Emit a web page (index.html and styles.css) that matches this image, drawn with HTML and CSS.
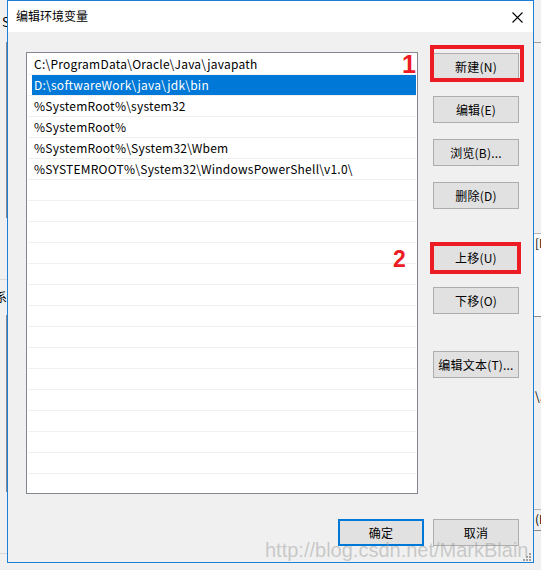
FILE: index.html
```html
<!DOCTYPE html>
<html lang="zh-CN">
<head>
<meta charset="utf-8">
<title>编辑环境变量</title>
<link rel="stylesheet" href="styles.css">
</head>
<body>
<div class="desk">
  <div class="behind">
    <span class="bk-s">S</span>
    <span class="bk-bar bk-bar1"></span>
    <span class="bk-bar bk-bar2"></span>
    <span class="bk-line bk-line1"></span>
    <span class="bk-xi">系</span>
    <span class="bk-line bk-line2"></span>
    <span class="bk-rline bk-rline1"></span>
    <span class="bk-rbox bk-rbox1"><span class="bk-rtext">[D</span></span>
    <span class="bk-rtext2">\.</span>
    <span class="bk-rbox bk-rbox2"><span class="bk-rtext">(L</span></span>
  </div>

  <div class="dialog">
    <div class="titlebar">
      <span class="title">编辑环境变量</span>
      <svg class="close" width="11" height="11" viewBox="0 0 11 11">
        <path d="M0.5 0.5 L10.5 10.5 M10.5 0.5 L0.5 10.5" stroke="#000" stroke-width="1.1" fill="none"/>
      </svg>
    </div>
    <div class="content">
      <div class="main">
        <div class="listbox">
          <div class="row"><span class="item">C:\ProgramData\Oracle\Java\javapath</span></div>
          <div class="row selected"><span class="item">D:\softwareWork\java\jdk\bin</span></div>
          <div class="row"><span class="item">%SystemRoot%\system32</span></div>
          <div class="row"><span class="item">%SystemRoot%</span></div>
          <div class="row"><span class="item">%SystemRoot%\System32\Wbem</span></div>
          <div class="row"><span class="item">%SYSTEMROOT%\System32\WindowsPowerShell\v1.0\</span></div>
          <div class="row"><span class="item"></span></div>
          <div class="row"><span class="item"></span></div>
          <div class="row"><span class="item"></span></div>
          <div class="row"><span class="item"></span></div>
          <div class="row"><span class="item"></span></div>
          <div class="row"><span class="item"></span></div>
          <div class="row"><span class="item"></span></div>
          <div class="row"><span class="item"></span></div>
          <div class="row"><span class="item"></span></div>
          <div class="row"><span class="item"></span></div>
          <div class="row"><span class="item"></span></div>
          <div class="row"><span class="item"></span></div>
          <div class="row"><span class="item"></span></div>
          <div class="row"><span class="item"></span></div>
          <div class="row"><span class="item"></span></div>
        </div>
        <div class="buttons">
          <button class="btn">新建(N)</button>
          <button class="btn">编辑(E)</button>
          <button class="btn">浏览(B)...</button>
          <button class="btn">删除(D)</button>
          <button class="btn btn-group">上移(U)</button>
          <button class="btn">下移(O)</button>
          <button class="btn btn-group2">编辑文本(T)...</button>
        </div>
      </div>
      <div class="footer">
        <button class="btn btn-default">确定</button>
        <button class="btn">取消</button>
      </div>
    </div>
    <svg class="grip" width="8" height="8" viewBox="0 0 8 8">
      <rect x="6" y="0" width="2" height="2" fill="#a0a0a0"/>
      <rect x="3" y="3" width="2" height="2" fill="#a0a0a0"/>
      <rect x="6" y="3" width="2" height="2" fill="#a0a0a0"/>
      <rect x="0" y="6" width="2" height="2" fill="#a0a0a0"/>
      <rect x="3" y="6" width="2" height="2" fill="#a0a0a0"/>
      <rect x="6" y="6" width="2" height="2" fill="#a0a0a0"/>
    </svg>
  </div>

  <div class="mark mark1"></div>
  <div class="mark mark2"></div>
  <span class="num num1">1</span>
  <span class="num num2">2</span>
  <span class="watermark">http://blog.csdn.net/MarkBlain</span>
</div>
</body>
</html>
```

FILE: styles.css
```css
* { box-sizing: border-box; }
html, body {
  margin: 0;
  padding: 0;
  background: #f0f0f0;
  font-family: "Noto Sans CJK SC", "Noto Sans", sans-serif;
  font-size: 12px;
  color: #000;
}
.desk {
  position: relative;
  width: 541px;
  height: 570px;
  overflow: hidden;
  padding-left: 7px;
}

/* window behind the dialog */
.behind span { position: absolute; }
.bk-s { left: 2px; top: 13px; font-size: 13px; line-height: 18px; }
.bk-bar { left: 6px; width: 2px; background: #8a8a8a; }
.bk-bar1 { top: 42px; height: 176px; }
.bk-bar2 { top: 315px; height: 177px; }
.bk-line { left: 0; width: 7px; height: 1px; background: #d9d9d9; }
.bk-line1 { top: 279px; }
.bk-line2 { top: 553px; }
.bk-xi { left: -5px; top: 289px; font-size: 12px; line-height: 16px; }
.bk-rline { left: 534px; width: 7px; height: 1px; background: #a0a0a0; }
.bk-rline1 { top: 42px; }
.bk-rbox {
  left: 534px; width: 12px;
  background: #fafafa;
  border-top: 1px solid #b5b5b5;
  border-bottom: 1px solid #8a8a8a;
  overflow: hidden;
}
.bk-rbox1 { top: 233px; height: 84px; }
.bk-rbox2 { top: 509px; height: 22px; background: #f0f0f0; }
.bk-rtext { display: block; padding-left: 1px; font-size: 12px; line-height: 18px; }
.bk-rtext2 { left: 535px; top: 388px; font-size: 12px; line-height: 16px; }

/* dialog */
.dialog {
  position: relative;
  width: 527px;
  height: 563px;
  border: 1px solid #1a7fd6;
  background: #f0f0f0;
  display: flex;
  flex-direction: column;
}
.titlebar {
  height: 31px;
  background: #fff;
  display: flex;
  align-items: center;
  justify-content: space-between;
  padding: 0 10px 1px 8px;
  flex-shrink: 0;
}
.title { font-size: 12px; line-height: 16px; }
.close { display: block; margin-top: 2px; }

.content { flex: 1; display: flex; flex-direction: column; }
.main {
  display: flex;
  align-items: flex-start;
  padding-left: 18px;
  margin-top: 20px;
}
.listbox {
  width: 392px;
  height: 442px;
  border: 1px solid #828790;
  background: #fff;
  padding: 1px 1px 0 1px;
  overflow: hidden;
}
.row {
  height: 21px;
  border-bottom: 1px solid #f0f0f0;
  display: flex;
}
.item {
  flex: 1;
  margin-left: 4px;
  padding-left: 2px;
  line-height: 20px;
  letter-spacing: 0.24px;
  white-space: nowrap;
}
.row.selected .item { background: #0078d7; color: #fff; }

.buttons {
  display: flex;
  flex-direction: column;
  gap: 16px;
  margin-left: 15px;
  margin-top: 1px;
}
.btn {
  width: 86px;
  height: 27px;
  background: #e1e1e1;
  border: 1px solid #adadad;
  border-radius: 0;
  padding: 0;
  font-family: "Noto Sans CJK SC", "Noto Sans", sans-serif;
  font-size: 12px;
  line-height: 16px;
  letter-spacing: 0.2px;
  color: #000;
}
.btn-group { margin-top: 19px; }
.btn-group2 { margin-top: 21px; }

.footer {
  display: flex;
  justify-content: flex-end;
  gap: 9px;
  padding-right: 14px;
  margin-top: 25px;
}
.btn-default { border: 2px solid #0078d7; }

.grip { position: absolute; right: 2px; bottom: 1px; }

/* annotations over the screenshot */
.mark {
  position: absolute;
  border: 4px solid #ed1c24;
}
.mark1 { left: 430px; top: 45px; width: 94px; height: 37px; }
.mark2 { left: 430px; top: 242px; width: 91px; height: 32px; }
.num {
  position: absolute;
  color: #ed1c24;
  font-family: "Liberation Sans", Arial, sans-serif;
  font-weight: bold;
}
.num1 { left: 402px; top: 50px; font-size: 25px; line-height: 28px; }
.num2 { left: 393px; top: 246px; font-size: 23px; line-height: 26px; }
.watermark {
  position: absolute;
  left: 265px;
  top: 540px;
  font-family: "Liberation Sans", Arial, sans-serif;
  font-size: 20px;
  line-height: 20px;
  color: rgba(150, 150, 150, 0.45);
  white-space: nowrap;
}
```
